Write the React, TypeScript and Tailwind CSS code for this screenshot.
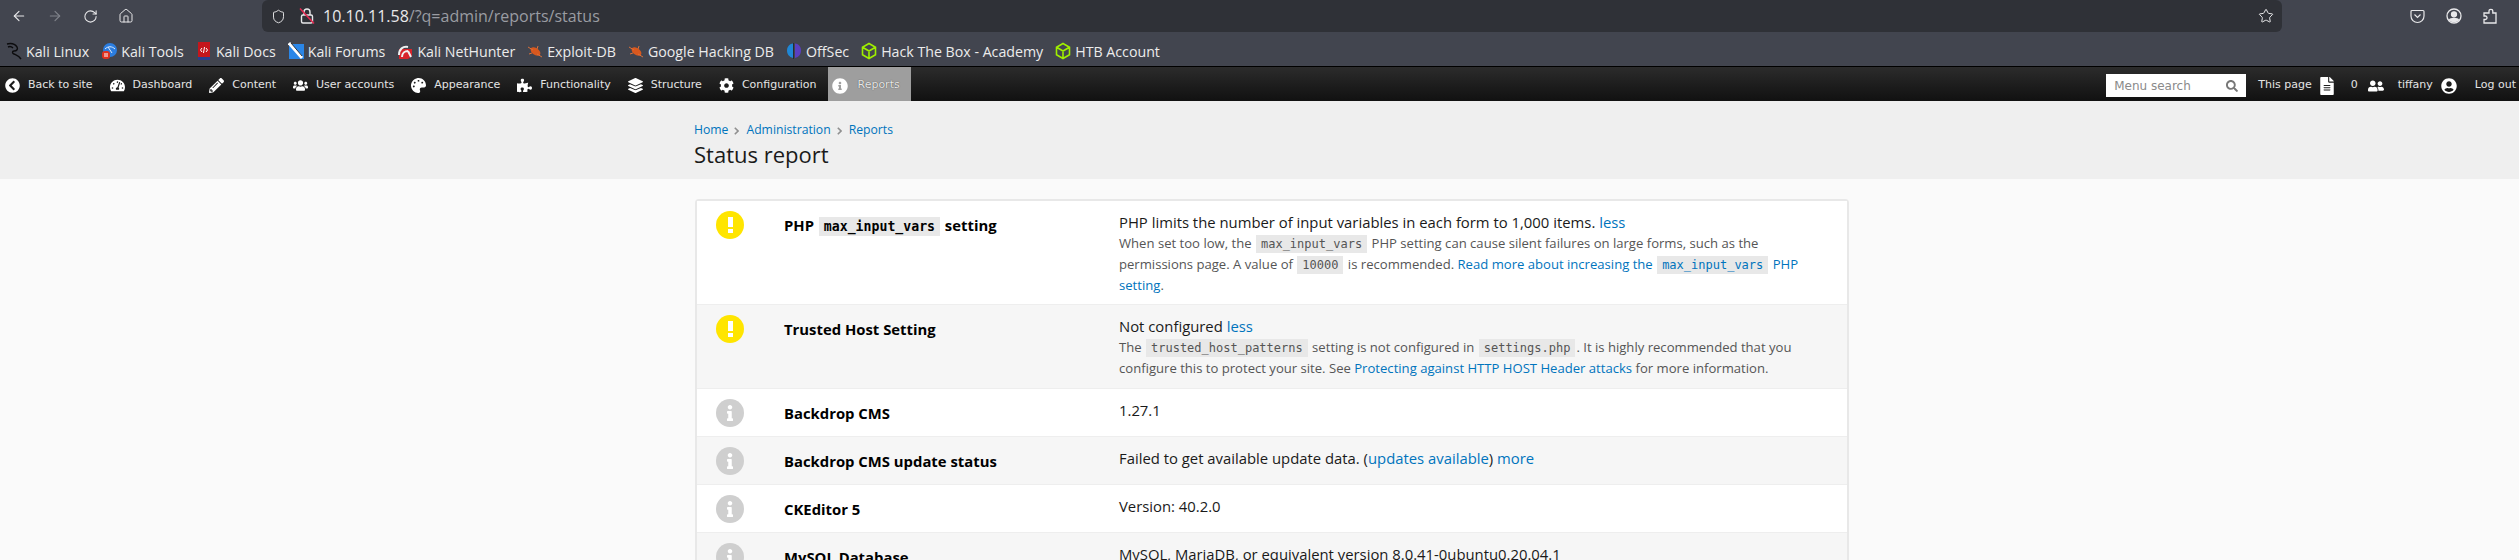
import { ArrowLeft, ArrowRight, RotateCw, House, Star, Shield } from 'lucide-react';
import {
  FaChevronCircleLeft,
  FaTachometerAlt,
  FaPencilAlt,
  FaUsers,
  FaPalette,
  FaPuzzlePiece,
  FaLayerGroup,
  FaCog,
  FaInfoCircle,
  FaSearch,
  FaFileAlt,
  FaUserFriends,
  FaUserCircle,
  FaInfo,
} from 'react-icons/fa';
import type { ReactNode } from 'react';

function Code({ children }: { children: ReactNode }) {
  return (
    <code className="mx-[1px] bg-[#e8e8e8] px-[5px] py-[2px] font-['DejaVu_Sans_Mono','Liberation_Mono',monospace] text-[12px]">
      {children}
    </code>
  );
}

function A({ children }: { children: ReactNode }) {
  return <a className="text-[#0074bd]">{children}</a>;
}

function Kali() {
  return (
    <svg width="16" height="18" viewBox="0 0 16 18" fill="none" stroke="#0c0c0e" strokeWidth="1.4">
      <path d="M1 2c4-1 8 0 10 3 1 2 0 4-3 4-2 0-2 2 0 3 2 1 5 2 7 5M2 5c2-1 4 0 5 1" />
    </svg>
  );
}

function Tools() {
  return (
    <svg width="16" height="18" viewBox="0 0 16 18">
      <circle cx="9" cy="8" r="7" fill="#2b7de0" />
      <path d="M4 7c3-3 7-3 10 0M7 5l4 6" stroke="#dfeafa" fill="none" />
      <rect x="1" y="9" width="8" height="8" rx="3" fill="#e0301e" />
      <path d="M4 11v4M6 11v4" stroke="#fff" />
    </svg>
  );
}

function Docs() {
  return (
    <svg width="16" height="18" viewBox="0 0 16 18">
      <rect x="2" y="0" width="12" height="16" fill="#c4161c" />
      <rect x="2" y="15" width="12" height="3" fill="#2a3f8f" />
      <path d="M6 6L4.500 8 6 10M10 6l1.500 2L10 10M8.500 5l-1 6" stroke="#fff" fill="none" />
    </svg>
  );
}

function Forums() {
  return (
    <svg width="16" height="18" viewBox="0 0 16 18">
      <rect x="1" y="2" width="15" height="15" fill="#2a86e8" />
      <path d="M1 1l13 15" stroke="#fff" strokeWidth="3" />
      <path d="M3 1l11 13" stroke="#111" strokeWidth="0.8" />
    </svg>
  );
}

function Hunter() {
  return (
    <svg width="16" height="18" viewBox="0 0 16 18">
      <path d="M2 7h13v7l-4 3H2z" fill="#d8232a" />
      <path d="M2 13C2 7 6 4 11 5M5 15c0-4 3-6 6-6M11 9l3 6" stroke="#f0f0f0" strokeWidth="2" fill="none" />
    </svg>
  );
}

function Bug() {
  return (
    <svg width="16" height="18" viewBox="0 0 16 18">
      <ellipse cx="8.500" cy="9.500" rx="5.500" ry="3.400" fill="#d9581e" transform="rotate(35 8.500 9.500)" />
      <path d="M1 5l5 3M15 15l-5-3M2 12l3-1M11 4l-1 3" stroke="#d9703a" />
    </svg>
  );
}

function OffSec() {
  return (
    <svg width="16" height="18" viewBox="0 0 16 18">
      <path d="M7 1.500C3 2 1 5 1 8.500s2 6.500 6 7.500z" fill="#1f87d6" />
      <path d="M9 1.500c4 .5 6 3.500 6 7s-2 6.500-6 7.500z" fill="#5a3fc0" />
      <path d="M7.500 1v16" stroke="#20242c" strokeWidth="0.8" />
    </svg>
  );
}

function Htb() {
  return (
    <svg width="16" height="18" viewBox="0 0 16 18" fill="none" stroke="#9fef00" strokeWidth="1.6">
      <path d="M8 1.500l6.500 3.700v7.600L8 16.500l-6.500-3.700V5.200zM1.500 5.200L8 9l6.500-3.800M8 9v7.500" />
    </svg>
  );
}

function StruckLock() {
  return (
    <svg width="16" height="18" viewBox="0 0 16 18" fill="none" stroke="#e8e8ea" strokeWidth="1.4">
      <rect x="2.500" y="8" width="11" height="8" rx="1.500" />
      <path d="M5 8V5a3 3 0 0 1 6 0v3" />
      <path d="M1 1.500l14 15" stroke="#e22850" strokeWidth="1.6" />
    </svg>
  );
}

function Pocket() {
  return (
    <svg width="15" height="15" viewBox="0 0 15 15" fill="none" stroke="#e8e8ea" strokeWidth="1.2">
      <path d="M2 1.500h11a1 1 0 0 1 1 1V7a6.500 6.500 0 0 1-13 0V2.500a1 1 0 0 1 1-1z" />
      <path d="M4.500 5.500l3 3 3-3" />
    </svg>
  );
}

function Account() {
  return (
    <svg width="16" height="16" viewBox="0 0 16 16" fill="none" stroke="#e8e8ea" strokeWidth="1.3">
      <circle cx="8" cy="8" r="7" />
      <circle cx="8" cy="6.300" r="2.500" fill="#e8e8ea" />
      <path d="M3.500 12c1-2 8-2 9 0-2 2-7 2-9 0z" fill="#e8e8ea" />
    </svg>
  );
}

function Extension() {
  return (
    <svg width="14" height="16" viewBox="0 0 14 16" fill="none" stroke="#e8e8ea" strokeWidth="1.3">
      <path d="M6 5V3.200C6 .8 9.800 .8 9.800 3.200V5H13v10H1v-3.500h1.500c2 0 2-3.500 0-3.500H1V5z" />
    </svg>
  );
}

function Sep() {
  return (
    <svg width="5" height="8" viewBox="0 0 5 8" fill="none" stroke="#909090" strokeWidth="1.6" className="ml-[6px] mr-[7px] mt-[2px]">
      <path d="M.8.800L4 4 .8 7.200" />
    </svg>
  );
}

const bookmarks: [ReactNode, string][] = [
  [<Kali />, 'Kali Linux'],
  [<Tools />, 'Kali Tools'],
  [<Docs />, 'Kali Docs'],
  [<Forums />, 'Kali Forums'],
  [<Hunter />, 'Kali NetHunter'],
  [<Bug />, 'Exploit-DB'],
  [<Bug />, 'Google Hacking DB'],
  [<OffSec />, 'OffSec'],
  [<Htb />, 'Hack The Box - Academy'],
  [<Htb />, 'HTB Account'],
];

const menu: [ReactNode, string][] = [
  [<FaChevronCircleLeft />, 'Back to site'],
  [<FaTachometerAlt />, 'Dashboard'],
  [<FaPencilAlt />, 'Content'],
  [<FaUsers />, 'User accounts'],
  [<FaPalette />, 'Appearance'],
  [<FaPuzzlePiece />, 'Functionality'],
  [<FaLayerGroup />, 'Structure'],
  [<FaCog />, 'Configuration'],
];

function WarnIcon() {
  return (
    <div className="flex h-7 w-7 flex-col items-center justify-center gap-[2px] rounded-full bg-[#ffe500]">
      <div className="h-[10px] w-[5px] bg-white" />
      <div className="h-[4px] w-[5px] bg-white" />
    </div>
  );
}

function InfoIcon() {
  return (
    <div className="flex h-7 w-7 items-center justify-center rounded-full bg-[#cfcfcf] text-[16px] text-white">
      <FaInfo />
    </div>
  );
}

function Row({
  icon,
  title,
  alt,
  className,
  children,
}: {
  icon: ReactNode;
  title: ReactNode;
  alt?: boolean;
  className?: string;
  children: ReactNode;
}) {
  return (
    <div className={`flex border-b border-[#eeeeee] ${alt ? 'bg-[#f6f6f6]' : 'bg-white'} ${className ?? ''}`}>
      <div className="flex w-[87px] shrink-0 justify-center pr-[21px] pt-[10px]">{icon}</div>
      <div className="w-[335px] shrink-0 pt-[13px] text-[14.85px] leading-[22px] font-bold text-black">{title}</div>
      <div className="flex-1 pt-[11px] pr-[20px] text-[14.85px] leading-[21px] text-[#1a1a1a]">{children}</div>
    </div>
  );
}

export default function App() {
  return (
    <div className="h-[560px] overflow-hidden bg-[#fafafa] font-['Open_Sans',sans-serif]">
      {/* browser chrome */}
      <div className="flex h-8 items-center bg-[#42454f] text-[#e8e8ea]">
        <div className="flex w-[262px] items-center gap-[20px] pl-[11px]">
          <ArrowLeft size={16} strokeWidth={1.7} />
          <ArrowRight size={16} strokeWidth={1.7} className="text-[#80838b]" />
          <RotateCw size={15} strokeWidth={1.7} />
          <House size={16} strokeWidth={1.5} />
        </div>
        <div className="flex h-8 w-[2020px] items-center rounded-md bg-[#2f3137] pl-[9px] pr-[8px] text-[16px]">
          <Shield size={15} strokeWidth={1.5} />
          <span className="ml-[13px]">
            <StruckLock />
          </span>
          <span className="ml-[8px] text-[#e8e8ea]">10.10.11.58</span>
          <span className="text-[#9a9ca2]">/?q=admin/reports/status</span>
          <Star size={16} strokeWidth={1.5} className="ml-auto" />
        </div>
        <div className="ml-[128px] flex items-center gap-[21px]">
          <Pocket />
          <Account />
          <Extension />
        </div>
      </div>

      <div className="flex h-[34px] items-center gap-[12px] bg-[#42454f] pl-[6px] pt-[5px] text-[14.2px] text-[#ececec]">
        {bookmarks.map(([icon, label]) => (
          <div key={label} className="flex items-center gap-[4px]">
            {icon}
            <span>{label}</span>
          </div>
        ))}
      </div>

      {/* admin bar */}
      <div className="flex h-[35px] items-stretch border-t border-black bg-gradient-to-b from-[#2c2c2c] to-[#111111] font-['DejaVu_Sans',sans-serif] text-[11px] text-[#e4e4e4]">
        <div className="flex items-center gap-[17px] pl-[5px] pt-[3px]">
          {menu.map(([icon, label]) => (
            <div key={label} className="flex items-center gap-[8px]">
              <span className="text-[15px] text-white">{icon}</span>
              <span>{label}</span>
            </div>
          ))}
        </div>
        <div className="ml-[12px] flex w-[83px] items-center gap-[9px] bg-[#9e9e9e] pl-[4px] pt-[3px] text-[#e8e8e8] [text-shadow:0_0_1px_#333]">
          <FaInfoCircle className="text-[16px] text-white" />
          <span>Reports</span>
        </div>
        <div className="ml-auto flex items-center pr-[3px] pt-[3px]">
          <div className="flex h-[23px] w-[140px] items-center justify-between bg-white px-[8px] text-[12px] text-[#8a8a8a]">
            <span>Menu search</span>
            <FaSearch className="text-[12px] text-[#777777]" />
          </div>
          <span className="ml-[12px]">This page</span>
          <FaFileAlt className="ml-[6px] text-[18px] text-white" />
          <span className="ml-[15px]">0</span>
          <FaUserFriends className="ml-[10px] text-[16px] text-white" />
          <span className="ml-[14px]">tiffany</span>
          <FaUserCircle className="ml-[8px] text-[16px] text-white" />
          <span className="ml-[18px]">Log out</span>
        </div>
      </div>

      {/* page header */}
      <div className="h-[78px] bg-[#efefef] pl-[694px] pt-[19px]">
        <div className="flex items-center text-[12.2px] leading-[20px] text-[#0074bd]">
          <span>Home</span>
          <Sep />
          <span>Administration</span>
          <Sep />
          <span>Reports</span>
        </div>
        <h1 className="mt-[-1px] text-[22px] leading-[30px] text-[#1a1a1a]">Status report</h1>
      </div>

      {/* status table */}
      <div className="ml-[695px] mt-[20px] w-[1154px] rounded-t border-x-2 border-t-2 border-[#e8e8e8]">
        <Row icon={<WarnIcon />} className="h-[104px]" title={<>PHP <code className="mx-[1px] bg-[#e8e8e8] px-[5px] py-[2px] font-['DejaVu_Sans_Mono',monospace] text-[13.2px]">max_input_vars</code> setting</>}>
          PHP limits the number of input variables in each form to 1,000 items. <A>less</A>
          <p className="text-[13.1px] leading-[20px] text-[#555555]">
            When set too low, the <Code>max_input_vars</Code> PHP setting can cause silent failures on large forms, such as the permissions page. A value of <Code>10000</Code> is recommended. <A>Read more about increasing the <Code>max_input_vars</Code> PHP setting</A>.
          </p>
        </Row>
        <Row icon={<WarnIcon />} alt className="h-[84px]" title="Trusted Host Setting">
          Not configured <A>less</A>
          <p className="text-[13.1px] leading-[20px] text-[#555555]">
            The <Code>trusted_host_patterns</Code> setting is not configured in <Code>settings.php</Code>. It is highly recommended that you configure this to protect your site. See <A>Protecting against HTTP HOST Header attacks</A> for more information.
          </p>
        </Row>
        <Row icon={<InfoIcon />} className="h-[48px]" title="Backdrop CMS">1.27.1</Row>
        <Row icon={<InfoIcon />} alt className="h-[48px]" title="Backdrop CMS update status">
          Failed to get available update data. (<A>updates available</A>) <A>more</A>
        </Row>
        <Row icon={<InfoIcon />} className="h-[48px]" title="CKEditor 5">Version: 40.2.0</Row>
        <Row icon={<InfoIcon />} alt className="h-[48px]" title="MySQL Database">
          MySQL, MariaDB, or equivalent version 8.0.41-0ubuntu0.20.04.1
        </Row>
      </div>
    </div>
  );
}
